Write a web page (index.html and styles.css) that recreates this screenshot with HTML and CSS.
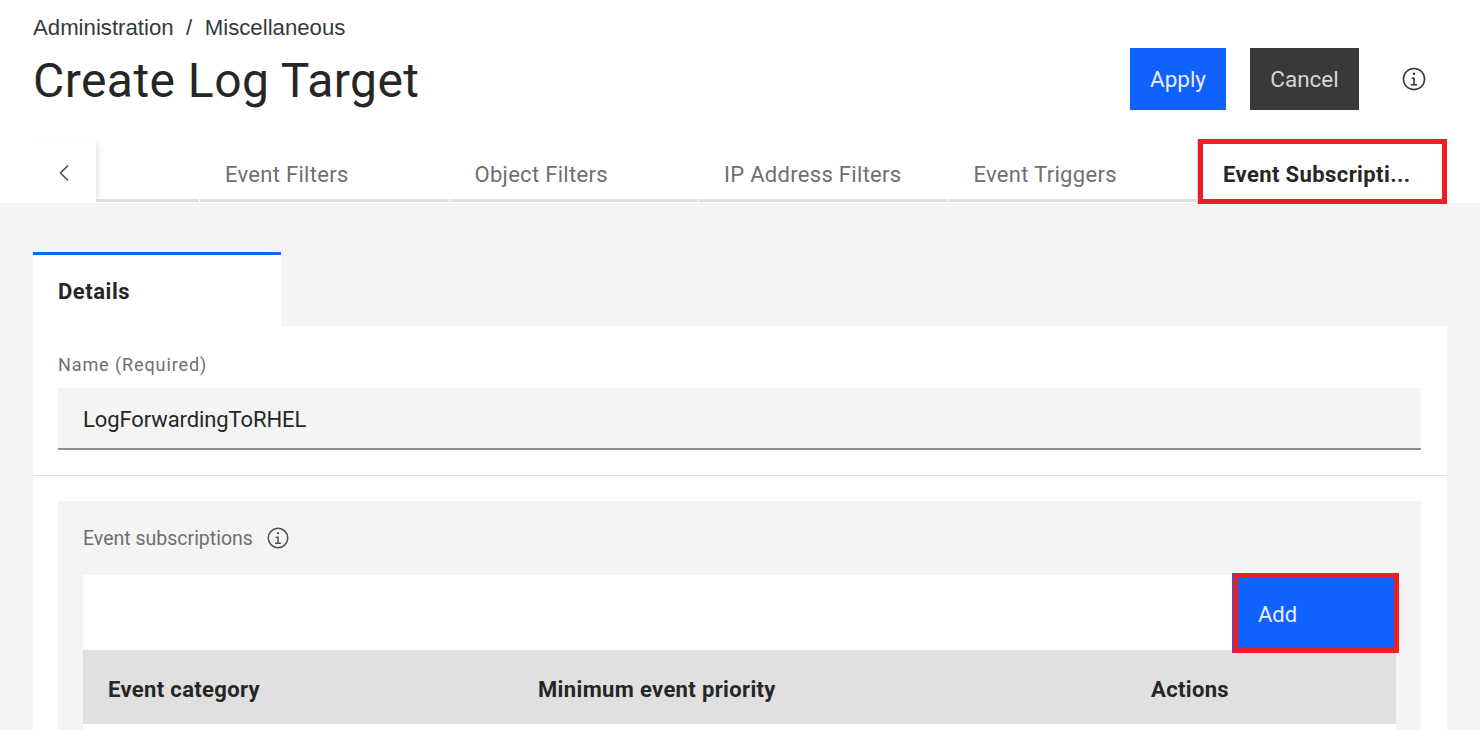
FILE: index.html
```html
<!doctype html>
<html>
    <head>
        <title>Create Log Target</title>
        <meta charset="utf-8">
        <link rel="stylesheet" href="styles.css">
    </head>

    <body>
        <svg class="defs" width="0" height="0">
            <symbol id="info" viewBox="0 0 32 32">
                <polygon points="17 22 17 14 13 14 13 16 15 16 15 22 12 22 12 24 20 24 20 22 17 22"/>
                <path d="M16,8a1.5,1.5,0,1,0,1.5,1.5A1.5,1.5,0,0,0,16,8Z"/>
                <path d="M16,30A14,14,0,1,1,30,16,14,14,0,0,1,16,30ZM16,4A12,12,0,1,0,28,16,12,12,0,0,0,16,4Z"/>
            </symbol>
        </svg>

        <header class="page-header">
            <div class="titles">
                <nav class="breadcrumb">
                    <span>Administration</span>
                    <span class="sep">/</span>
                    <span>Miscellaneous</span>
                </nav>
                <h1>Create Log Target</h1>
            </div>
            <div class="actions">
                <button class="btn btn-primary">Apply</button>
                <button class="btn btn-dark">Cancel</button>
                <svg class="icon-help"><use href="#info"/></svg>
            </div>
        </header>

        <div class="tabs">
            <button class="tab-back">
                <svg width="12" height="18" viewBox="0 0 12 18"><path d="M10 1.5 2.5 9l7.5 7.5" fill="none" stroke="#525252" stroke-width="1.7"/></svg>
            </button>
            <div class="tab tab-hidden"></div>
            <div class="tab">Event Filters</div>
            <div class="tab">Object Filters</div>
            <div class="tab">IP Address Filters</div>
            <div class="tab">Event Triggers</div>
            <div class="tab tab-active">Event Subscripti...</div>
        </div>

        <main class="content">
            <div class="subtab">Details</div>
            <section class="panel">
                <div class="field">
                    <label class="field-label">Name (Required)</label>
                    <div class="input">LogForwardingToRHEL</div>
                </div>
                <div class="subscriptions">
                    <div class="sub-label">
                        Event subscriptions
                        <svg class="icon-tip"><use href="#info"/></svg>
                    </div>
                    <div class="toolbar">
                        <button class="btn-add">Add</button>
                    </div>
                    <div class="table-head">
                        <div class="col-category">Event category</div>
                        <div class="col-priority">Minimum event priority</div>
                        <div class="col-actions">Actions</div>
                    </div>
                    <div class="table-body"></div>
                </div>
            </section>
        </main>
    </body>
</html>
```

FILE: styles.css
```css
* {
    box-sizing: border-box;
}
body {
    margin: 0;
    height: 730px;
    overflow: hidden;
    display: flex;
    flex-direction: column;
    background-color: white;
    color: #262626;
    font-family: 'Roboto', 'Noto Sans', sans-serif;
}
button {
    font-family: inherit;
    border: 0;
}
.defs {
    position: absolute;
}
.page-header {
    flex: none;
    display: flex;
    justify-content: space-between;
    padding: 14px 33px 0;
    height: 139px;
}
.breadcrumb {
    display: flex;
    gap: 12.5px;
    font-family: 'Liberation Sans', sans-serif;
    font-size: 22.2px;
    line-height: 28px;
    color: #393939;
}
h1 {
    margin: 8px 0 0;
    font-size: 48px;
    line-height: 62px;
    font-weight: 400;
    letter-spacing: 0.45px;
    color: #262626;
}
.actions {
    display: flex;
    align-items: flex-start;
    padding-top: 34px;
}
.btn {
    height: 62px;
    font-size: 22.5px;
    color: #e8eefc;
}
.btn-primary {
    width: 96px;
    background-color: #0f62fe;
}
.btn-dark {
    width: 109px;
    margin-left: 24px;
    background-color: #393939;
    color: #d6d6d6;
}
.icon-help {
    width: 26px;
    height: 26px;
    margin: 18px 20px 0 42px;
    fill: #393939;
}
.tabs {
    flex: none;
    display: flex;
    height: 64px;
    padding-left: 33px;
}
.tab-back {
    flex: none;
    width: 63px;
    height: 62px;
    margin-top: 1px;
    padding: 7px 2px 0 0;
    background: white;
    box-shadow: 5px 0 6px -3px rgba(0, 0, 0, 0.12);
    position: relative;
}
.tab {
    flex: none;
    width: 248.5px;
    height: 62px;
    margin-top: 1px;
    margin-right: 1px;
    padding: 9px 0 0 25px;
    border-bottom: 3px solid #e0e0e0;
    display: flex;
    align-items: center;
    font-size: 22px;
    letter-spacing: 0.3px;
    color: #6f6f6f;
}
.tab-hidden {
    width: 103px;
    padding: 0;
}
/* frame hangs 1px over the grey content area */
.tab-active {
    position: relative;
    z-index: 1;
    width: 249px;
    height: 65px;
    margin: 0;
    padding: 6px 0 0 20px;
    border: 5px solid #ee1c25;
    box-shadow: -1px 0 0 #c5d6f5;
    font-weight: 700;
    letter-spacing: 0.4px;
    color: #262626;
}
.content {
    flex: 1;
    min-height: 0;
    overflow: hidden;
    padding: 49px 33px 0;
    background-color: #f4f4f4;
}
.subtab {
    width: 248px;
    height: 74px;
    padding: 2px 0 0 25px;
    border-top: 3px solid #0f62fe;
    background-color: white;
    display: flex;
    align-items: center;
    font-size: 22px;
    font-weight: 700;
    letter-spacing: 0.55px;
}
.panel {
    background-color: white;
    height: 404px;
}
.field {
    padding: 28px 26px 25px 25px;
    border-bottom: 1px solid #e0e0e0;
}
.field-label {
    display: block;
    font-size: 18px;
    line-height: 22px;
    letter-spacing: 0.9px;
    color: #6f6f6f;
    margin-bottom: 12px;
}
.input {
    height: 62px;
    padding: 2px 0 0 25px;
    background-color: #f4f4f4;
    border-bottom: 2px solid #8d8d8d;
    display: flex;
    align-items: center;
    font-size: 22px;
    letter-spacing: -0.1px;
}
.subscriptions {
    margin: 25px 26px 0 25px;
    padding: 0 25px;
    height: 229px;
    background-color: #f4f4f4;
}
.sub-label {
    height: 74px;
    display: flex;
    align-items: center;
    font-size: 19.5px;
    color: #6f6f6f;
}
.icon-tip {
    width: 24px;
    height: 24px;
    margin-left: 13px;
    fill: #525252;
}
.toolbar {
    height: 75px;
    background-color: white;
    position: relative;
}
/* sits over the table edge, the red frame is wider than the toolbar */
.btn-add {
    position: absolute;
    top: -2px;
    right: -3px;
    width: 166px;
    height: 80px;
    padding: 2px 0 0 20px;
    border: 5px solid #ee1c25;
    box-shadow: -1px 0 0 #0f62fe;
    background-color: #0f62fe;
    color: #e8eefc;
    font-size: 22px;
    text-align: left;
}
.table-head {
    height: 74px;
    padding: 4px 0 0 25px;
    background-color: #e0e0e0;
    display: flex;
    align-items: center;
    font-size: 22px;
    font-weight: 700;
    letter-spacing: 0.35px;
}
.col-category {
    width: 430px;
}
.col-priority {
    width: 613px;
}
.table-body {
    height: 6px;
    background-color: white;
}
```
